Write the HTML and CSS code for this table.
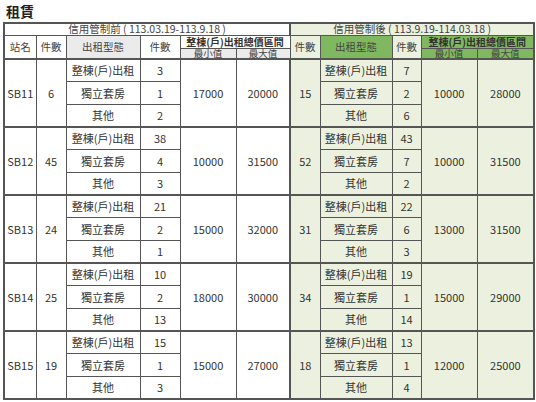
FILE: index.html
```html
<!DOCTYPE html>
<html lang="zh-Hant">
<head>
<meta charset="utf-8">
<title>租賃</title>
<link rel="stylesheet" href="styles.css">
</head>
<body>
<div class="page">
<h1 class="title">租賃</h1>
<table class="rent">
<colgroup>
<col class="c1"><col class="c2"><col class="c3"><col class="c4"><col class="c5"><col class="c6">
<col class="c7"><col class="c8"><col class="c9"><col class="c10"><col class="c11">
</colgroup>
<thead>
<tr class="h1">
<th colspan="6" class="period">信用管制前 ( 113.03.19-113.9.18 )</th>
<th colspan="5" class="period g-light">信用管制後 ( 113.9.19-114.03.18 )</th>
</tr>
<tr class="h2">
<th rowspan="2">站名</th>
<th rowspan="2">件數</th>
<th rowspan="2" class="gray">出租型態</th>
<th rowspan="2">件數</th>
<th colspan="2" class="range">整棟(戶)出租總價區間</th>
<th rowspan="2" class="g-light">件數</th>
<th rowspan="2" class="g-dark">出租型態</th>
<th rowspan="2" class="g-light">件數</th>
<th colspan="2" class="range g-dark">整棟(戶)出租總價區間</th>
</tr>
<tr class="h3">
<th class="gray sub">最小值</th>
<th class="gray sub">最大值</th>
<th class="g-dark sub">最小值</th>
<th class="g-dark sub">最大值</th>
</tr>
</thead>
<tbody>
<tr class="r1 grp"><td rowspan="3">SB11</td><td rowspan="3">6</td><td>整棟(戶)出租</td><td>3</td><td rowspan="3">17000</td><td rowspan="3">20000</td><td rowspan="3" class="g">15</td><td class="g">整棟(戶)出租</td><td class="g">7</td><td rowspan="3" class="g">10000</td><td rowspan="3" class="g">28000</td></tr>
<tr class="r2"><td>獨立套房</td><td>1</td><td class="g">獨立套房</td><td class="g">2</td></tr>
<tr class="r3"><td>其他</td><td>2</td><td class="g">其他</td><td class="g">6</td></tr>

<tr class="r1 grp"><td rowspan="3">SB12</td><td rowspan="3">45</td><td>整棟(戶)出租</td><td>38</td><td rowspan="3">10000</td><td rowspan="3">31500</td><td rowspan="3" class="g">52</td><td class="g">整棟(戶)出租</td><td class="g">43</td><td rowspan="3" class="g">10000</td><td rowspan="3" class="g">31500</td></tr>
<tr class="r2"><td>獨立套房</td><td>4</td><td class="g">獨立套房</td><td class="g">7</td></tr>
<tr class="r3"><td>其他</td><td>3</td><td class="g">其他</td><td class="g">2</td></tr>

<tr class="r1 grp"><td rowspan="3">SB13</td><td rowspan="3">24</td><td>整棟(戶)出租</td><td>21</td><td rowspan="3">15000</td><td rowspan="3">32000</td><td rowspan="3" class="g">31</td><td class="g">整棟(戶)出租</td><td class="g">22</td><td rowspan="3" class="g">13000</td><td rowspan="3" class="g">31500</td></tr>
<tr class="r2"><td>獨立套房</td><td>2</td><td class="g">獨立套房</td><td class="g">6</td></tr>
<tr class="r3"><td>其他</td><td>1</td><td class="g">其他</td><td class="g">3</td></tr>

<tr class="r1 grp"><td rowspan="3">SB14</td><td rowspan="3">25</td><td>整棟(戶)出租</td><td>10</td><td rowspan="3">18000</td><td rowspan="3">30000</td><td rowspan="3" class="g">34</td><td class="g">整棟(戶)出租</td><td class="g">19</td><td rowspan="3" class="g">15000</td><td rowspan="3" class="g">29000</td></tr>
<tr class="r2"><td>獨立套房</td><td>2</td><td class="g">獨立套房</td><td class="g">1</td></tr>
<tr class="r3"><td>其他</td><td>13</td><td class="g">其他</td><td class="g">14</td></tr>

<tr class="r1 grp"><td rowspan="3">SB15</td><td rowspan="3">19</td><td>整棟(戶)出租</td><td>15</td><td rowspan="3">15000</td><td rowspan="3">27000</td><td rowspan="3" class="g">18</td><td class="g">整棟(戶)出租</td><td class="g">13</td><td rowspan="3" class="g">12000</td><td rowspan="3" class="g">25000</td></tr>
<tr class="r2"><td>獨立套房</td><td>1</td><td class="g">獨立套房</td><td class="g">1</td></tr>
<tr class="r3"><td>其他</td><td>3</td><td class="g">其他</td><td class="g">4</td></tr>
</tbody>
</table>
</div>
</body>
</html>
```
FILE: styles.css
```css
html, body {
  margin: 0;
  padding: 0;
  background: #ffffff;
}
body {
  font-family: "Noto Sans CJK TC", "Noto Sans", sans-serif;
  color: #333333;
}
.page {
  padding: 0 3px;
}
.title {
  margin: 0;
  padding: 2px 0 0 3px;
  height: 20px;
  font-size: 14px;
  line-height: 18px;
  font-weight: 700;
  color: #222222;
}
.rent {
  border-collapse: collapse;
  table-layout: fixed;
  width: 530px;
  border: 2px solid #555555;
}
.c1 { width: 32px; }
.c2 { width: 30px; }
.c3 { width: 74px; }
.c4 { width: 40px; }
.c5 { width: 56px; }
.c6 { width: 54px; }
.c7 { width: 30px; }
.c8 { width: 72px; }
.c9 { width: 29px; }
.c10 { width: 56px; }
.c11 { width: 57px; }
.rent th, .rent td {
  border: 1px solid #555555;
  padding: 0;
  text-align: center;
  vertical-align: middle;
  white-space: nowrap;
}
.rent th {
  font-weight: 400;
  font-size: 10.5px;
  line-height: 10px;
  color: #444444;
}
.rent td {
  font-size: 11px;
  line-height: 12px;
}
.h1 { height: 12px; }
.h2 { height: 13px; }
.h3 { height: 10px; }
.rent th.range { font-weight: 700; font-size: 10px; line-height: 10px; color: #333333; }
.rent th.sub { font-size: 9.5px; line-height: 9px; }
.gray { background: #ebebeb; }
.g-light, .rent td.g { background: #ebf1de; }
.g-dark { background: #7fb85f; }
.r1 { height: 23px; }
.r2 { height: 23px; }
.r3 { height: 22px; }
.grp td { border-top: 2px solid #555555; }
.rent td:nth-child(6), .rent th.period:first-child { border-right: 2px solid #555555; }
```
